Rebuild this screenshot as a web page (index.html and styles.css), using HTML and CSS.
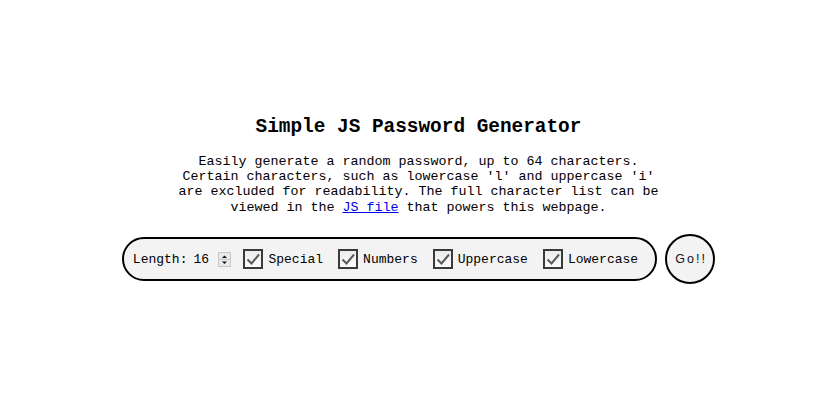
FILE: index.html
```html
<!DOCTYPE html>
<html>
<head>
<meta charset="utf-8">
<link rel="stylesheet" href="styles.css">
</head>
<body>
<main class="page">
  <h1 class="title">Simple JS Password Generator</h1>
  <p class="intro">Easily generate a random password, up to 64 characters. Certain characters, such as lowercase 'l' and uppercase 'i' are excluded for readability. The full character list can be viewed in the <a href="#" class="link">JS file</a> that powers this webpage.</p>
  <div class="controls">
    <div class="pill">
      <span class="label">Length:</span>
      <span class="num">16</span>
      <span class="spin">
        <svg width="13" height="15" viewBox="0 0 13 15">
          <rect x="0.5" y="0.5" width="12" height="14" fill="#e9e9e9" stroke="#c8c8c8"/>
          <line x1="1" y1="7.5" x2="12" y2="7.5" stroke="#c8c8c8"/>
          <path d="M4 6 L6.5 3.5 L9 6 Z" fill="#111"/>
          <path d="M4 9.5 L6.5 12 L9 9.5 Z" fill="#111"/>
        </svg>
      </span>
      <span class="opt"><span class="box"><svg width="16" height="16" viewBox="0 0 16 16"><path d="M2.5 8.5 L6.5 12.5 L14 3.5" fill="none" stroke="#5a5a5a" stroke-width="2"/></svg></span>Special</span>
      <span class="opt"><span class="box"><svg width="16" height="16" viewBox="0 0 16 16"><path d="M2.5 8.5 L6.5 12.5 L14 3.5" fill="none" stroke="#5a5a5a" stroke-width="2"/></svg></span>Numbers</span>
      <span class="opt"><span class="box"><svg width="16" height="16" viewBox="0 0 16 16"><path d="M2.5 8.5 L6.5 12.5 L14 3.5" fill="none" stroke="#5a5a5a" stroke-width="2"/></svg></span>Uppercase</span>
      <span class="opt"><span class="box"><svg width="16" height="16" viewBox="0 0 16 16"><path d="M2.5 8.5 L6.5 12.5 L14 3.5" fill="none" stroke="#5a5a5a" stroke-width="2"/></svg></span>Lowercase</span>
    </div>
    <button class="go">Go!!</button>
  </div>
</main>
</body>
</html>
```

FILE: styles.css
```css
html, body {
  margin: 0;
  padding: 0;
  background: #fff;
}
body {
  font-family: "Liberation Mono", "Courier New", monospace;
  color: #000;
}
.page {
  display: flex;
  flex-direction: column;
  align-items: center;
  padding-top: 115px;
}
.title {
  margin: 0;
  font-size: 19.4px;
  font-weight: bold;
  line-height: 24px;
}
.intro {
  margin: 15px 0 0 0;
  width: 490px;
  text-align: center;
  font-size: 13.33px;
  line-height: 15.2px;
}
.link {
  color: #0000ee;
}
.controls {
  margin-top: 19.5px;
  display: flex;
  align-items: center;
  gap: 8px;
}
.pill {
  height: 40px;
  box-sizing: content-box;
  border: 2px solid #000;
  border-radius: 22px;
  background: #f3f3f3;
  display: flex;
  align-items: center;
  padding: 0 17px 0 9px;
  font-size: 13px;
}
.label {
  margin-right: 6px;
}
.num {
  width: 25px;
}
.spin {
  display: flex;
  margin-right: 12px;
}
.opt {
  display: flex;
  align-items: center;
  margin-right: 15px;
}
.opt:last-child {
  margin-right: 0;
}
.box {
  width: 16px;
  height: 16px;
  border: 2px solid #3a3a3a;
  background: linear-gradient(#ececec, #fbfbfb);
  margin-right: 5px;
  display: flex;
}
.go {
  width: 50px;
  height: 50px;
  border-radius: 50%;
  border: 2px solid #000;
  background: #f3f3f3;
  font-family: "Liberation Sans", Arial, sans-serif;
  font-size: 12.5px;
  color: #112;
  padding: 0 0 0 2px;
  letter-spacing: 2px;
}
```
